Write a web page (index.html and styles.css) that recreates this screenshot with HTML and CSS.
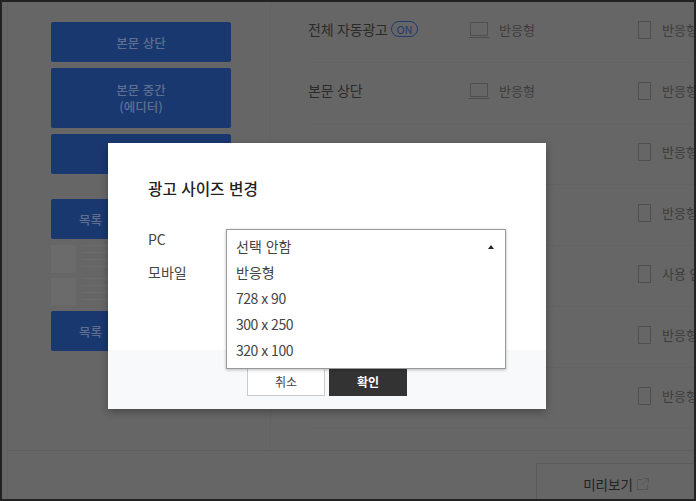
FILE: index.html
```html
<!DOCTYPE html>
<html lang="ko">
<head>
<meta charset="utf-8">
<title>광고 사이즈 변경</title>
<link rel="stylesheet" href="styles.css">
</head>
<body>
<div class="frame">
  <div class="page">
    <div class="main">
      <aside class="side">
        <div class="slot">본문 상단</div>
        <div class="slot tall">본문 중간<br>(에디터)</div>
        <div class="slot"></div>
        <div class="slot list">목록</div>
        <div class="thumbs">
          <div class="thumb"><i></i><b></b></div>
          <div class="thumb"><i></i><b></b></div>
        </div>
        <div class="slot list-end">목록</div>
      </aside>
      <section class="table">
        <div class="row"><div class="name">전체 자동광고 <span class="on">ON</span></div>
          <div class="cell pc"><svg width="20" height="18" viewBox="0 0 20 18"><path d="M1.500 1.500h17v13h-17zM0 16.500h20" /></svg>반응형</div>
          <div class="cell mo"><svg width="14" height="18" viewBox="0 0 14 18"><path d="M.5.500h12v17h-12z"/></svg>반응형</div></div>
        <div class="row"><div class="name">본문 상단</div>
          <div class="cell pc"><svg width="20" height="18" viewBox="0 0 20 18"><path d="M1.500 1.500h17v13h-17zM0 16.500h20" /></svg>반응형</div>
          <div class="cell mo"><svg width="14" height="18" viewBox="0 0 14 18"><path d="M.5.500h12v17h-12z"/></svg>반응형</div></div>
        <div class="row"><div class="name"></div><div class="cell pc"></div>
          <div class="cell mo"><svg width="14" height="18" viewBox="0 0 14 18"><path d="M.5.500h12v17h-12z"/></svg>반응형</div></div>
        <div class="row"><div class="name"></div><div class="cell pc"></div>
          <div class="cell mo"><svg width="14" height="18" viewBox="0 0 14 18"><path d="M.5.500h12v17h-12z"/></svg>반응형</div></div>
        <div class="row"><div class="name"></div><div class="cell pc"></div>
          <div class="cell mo"><svg width="14" height="18" viewBox="0 0 14 18"><path d="M.5.500h12v17h-12z"/></svg>사용 안함</div></div>
        <div class="row"><div class="name"></div><div class="cell pc"></div>
          <div class="cell mo"><svg width="14" height="18" viewBox="0 0 14 18"><path d="M.5.500h12v17h-12z"/></svg>반응형</div></div>
        <div class="row"><div class="name"></div><div class="cell pc"></div>
          <div class="cell mo"><svg width="14" height="18" viewBox="0 0 14 18"><path d="M.5.500h12v17h-12z"/></svg>반응형</div></div>
      </section>
    </div>
    <div class="bottom">
      <div class="preview">미리보기 <svg width="12" height="12" viewBox="0 0 12 12"><path d="M5 1.500H.5v10h10V7M7 .5h4.500V5M11.500.5L5 7"/></svg></div>
    </div>
  </div>

  <div class="modal">
    <div class="modal-body">
      <h2 class="title">광고 사이즈 변경</h2>
      <div class="labels">
        <div>PC</div>
        <div>모바일</div>
      </div>
    </div>
    <div class="modal-foot">
      <button class="btn">취소</button>
      <button class="btn dark">확인</button>
    </div>
    <div class="dropdown">
      <div class="opt first">선택 안함<span class="caret"></span></div>
      <div class="opt">반응형</div>
      <div class="opt num">728 x 90</div>
      <div class="opt num">300 x 250</div>
      <div class="opt num">320 x 100</div>
    </div>
  </div>
</div>
</body>
</html>
```
FILE: styles.css
```css
* { box-sizing: border-box; }
html, body { margin: 0; padding: 0; }
body { width: 696px; height: 501px; overflow: hidden; font-family: "Noto Sans CJK KR", "Noto Sans", sans-serif; }
.frame { position: relative; width: 696px; height: 501px; background: #666; border: 2px solid #222; overflow: hidden; }
.page { margin-left: 5px; height: 100%; border-left: 1px solid #606060; display: flex; flex-direction: column; }
.main { display: flex; height: 449px; border-bottom: 1px solid #5f5f5f; flex: none; }
.side { width: 263px; padding: 20px 0 0 43px; border-right: 1px solid #626262; display: flex; flex-direction: column; gap: 6px; flex: none; }
.slot { width: 180px; height: 40px; background: #193870; border-radius: 2px; color: #5f6f90; font-size: 12.500px; font-weight: 500; display: flex; align-items: center; justify-content: center; text-align: center; line-height: 17px; flex: none; }
.slot.tall { height: 60px; }
.slot.list, .slot.list-end { justify-content: flex-start; padding-left: 28px; }
.slot.list { margin-top: 19px; }
.thumbs { display: flex; flex-direction: column; gap: 5px; height: 60px; }
.thumb { height: 28px; width: 180px; display: flex; gap: 6px; }
.thumb i { width: 25px; background: #6b6b6b; }
.thumb b { width: 50px; background: repeating-linear-gradient(#6c6c6c 0 1px, #666 1px 7px); }
.table { padding-left: 37px; flex: 1; overflow: hidden; }
.row { height: 61px; display: flex; align-items: center; padding-bottom: 5px; border-bottom: 1px solid #636363; }
.name { width: 161px; font-size: 14px; letter-spacing: -.2px; color: #2a2a2a; line-height: 18px; flex: none; margin-top: -1px; }
.on { display: inline-block; font-size: 11px; letter-spacing: -.2px; line-height: 14px; color: #1f3a70; border: 1px solid #1f3a70; border-radius: 8px; padding: 0 5px; vertical-align: 1px; margin-left: -1px; }
.cell { display: flex; align-items: center; gap: 10px; font-size: 13px; color: #3c3c3c; white-space: nowrap; flex: none; }
.cell.pc { width: 169px; }
.cell svg, .preview svg { fill: none; stroke: #4e4e4e; stroke-width: 1; }
.bottom { flex: 1; display: flex; justify-content: flex-end; }
.preview { width: 160px; margin-top: 12px; padding-top: 4px; border: 1px solid #5a5a5a; border-bottom: 0; font-size: 13.500px; color: #222; display: flex; align-items: center; justify-content: center; gap: 4px; margin-right: -2px; }
.preview svg { stroke: #555; }
.modal { position: absolute; left: 106px; top: 141px; width: 438px; height: 266px; background: #fff; box-shadow: 0 3px 8px rgba(0,0,0,.3); display: flex; flex-direction: column; color: #333; }
.modal-body { flex: none; height: 207px; padding: 34px 40px 0; }
.title { margin: 0; font-size: 15.700px; font-weight: 500; color: #222; line-height: 24px; }
.labels { margin-top: 22px; font-size: 14px; color: #444; line-height: 33px; font-weight: 400; }
.labels div { height: 33px; }
.modal-foot { flex: 1; background: #f8f9fb; display: flex; justify-content: center; gap: 4px; padding-top: 16px; }
.btn { width: 78px; height: 30px; border: 1px solid #ccc; background: #fff; font: inherit; font-size: 12px; color: #444; padding: 0; }
.btn.dark { background: #333; border-color: #333; color: #fff; font-weight: 700; }
.dropdown { position: absolute; left: 118px; top: 86px; width: 280px; height: 140px; background: #fff; border: 1px solid #999; box-shadow: 0 1px 3px rgba(0,0,0,.25); padding-top: 3px; }
.opt { height: 26px; padding: 0 9px; font-size: 14px; line-height: 26px; color: #444; position: relative; }
.opt.num { letter-spacing: -.5px; }
.caret { position: absolute; right: 11px; top: 12px; border: solid transparent; border-width: 0 3.500px 4px; border-bottom-color: #222; }
```
